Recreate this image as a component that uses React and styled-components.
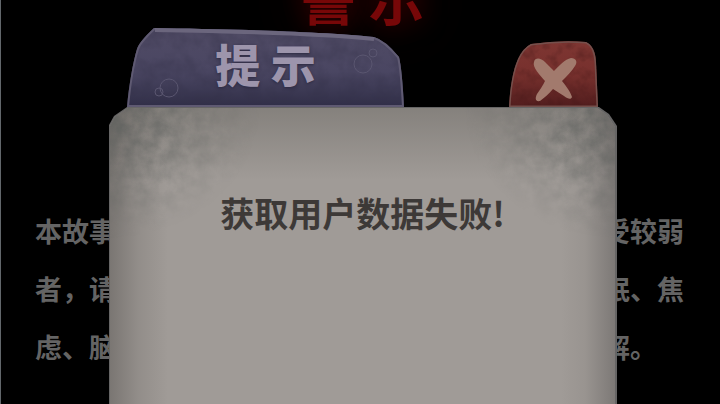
import React from "react";
import styled, { createGlobalStyle } from "styled-components";

const GlobalStyle = createGlobalStyle`
  * { box-sizing: border-box; }
  body {
    margin: 0;
    background: #000;
    font-family: "Noto Sans CJK SC", "Noto Sans", sans-serif;
  }
`;

const Page = styled.div`
  position: relative;
  height: 100vh;
  overflow: hidden;
  border-left: 1px solid #62676b;
  background: #000;
`;

const Warning = styled.main`
  padding: 0 36px 0 34px;
`;

const WarningTitle = styled.h1`
  margin: -36px 0 0;
  padding-left: 6px;
  height: 238px;
  font-size: 56px;
  line-height: 64px;
  font-weight: 700;
  text-align: center;
  color: #770708;
  text-shadow: 0 0 24px #3c0000, 0 0 56px #2c0000;
`;

const Notice = styled.div`
  color: #646464;
  font-size: 27px;
  line-height: 58px;
  font-weight: 700;
`;

const NoticeLine = styled.p`
  display: grid;
  grid-template-columns: 81px 81px;
  justify-content: space-between;
  margin: 0;
`;

const Dialog = styled.section`
  position: absolute;
  inset: 0;
  display: flex;
  flex-direction: column;
  padding: 27px 103px 0 108px;
`;

const DialogHeader = styled.header`
  display: flex;
  justify-content: space-between;
  align-items: flex-end;
  height: 80px;
  padding: 0 18px;
`;

const Shape = styled.svg`
  position: absolute;
  inset: 0;
  width: 100%;
  height: 100%;
`;

const TitleTab = styled.div`
  position: relative;
  width: 277px;
  height: 80px;
`;

const DialogTitle = styled.h2`
  position: relative;
  margin: 0;
  padding-top: 5px;
  color: #9d95ac;
  font-size: 45px;
  line-height: 64px;
  font-weight: 900;
  text-align: center;
  text-shadow: 0 1px 3px #2b2940;
`;

const CloseButton = styled.button`
  position: relative;
  width: 91px;
  height: 67px;
  padding: 0;
  border: 0;
  background: transparent;
  cursor: pointer;
`;

const corners = "polygon(0 18px, 5px 9px, 18px 0, calc(100% - 18px) 0, calc(100% - 8px) 7px, 100% 19px, 100% 100%, 0 100%)";

const PanelEdge = styled.div`
  display: flex;
  flex: 1;
  padding: 1px 2px 0 1px;
  background: #666565;
  clip-path: ${corners};
`;

const Panel = styled.div`
  position: relative;
  flex: 1;
  padding: 75px 24px 24px;
  clip-path: ${corners};
  background:
    linear-gradient(90deg, rgba(70, 67, 64, 0.42), rgba(90, 86, 83, 0.2) 28px, transparent 58px),
    linear-gradient(270deg, rgba(90, 87, 86, 0.5), rgba(90, 86, 83, 0.1) 30px, transparent 54px),
    linear-gradient(180deg, rgba(85, 83, 78, 0.36), transparent 72px),
    #a09b97;
`;

const Message = styled.p`
  position: relative;
  margin: 0;
  color: #3d3937;
  font-size: 34px;
  line-height: 60px;
  font-weight: 700;
  text-align: center;
`;

const Grunge = styled.svg`
  position: absolute;
  top: 0;
  ${(p) => p.$side}: 0;
  width: 150px;
  height: 130px;
`;

function CornerGrunge({ side }) {
  const right = side === "right";
  return (
    <Grunge $side={side} viewBox="0 0 150 130" aria-hidden="true">
      <defs>
        <filter id={`stain-${side}`} x="0" y="0" width="100%" height="100%" colorInterpolationFilters="sRGB">
          <feTurbulence type="fractalNoise" baseFrequency="0.07" numOctaves="5" seed={right ? 8 : 3} />
          <feColorMatrix values="0 0 0 0 0.37  0 0 0 0 0.38  0 0 0 0 0.37  1.8 0 0 0 -0.45" />
        </filter>
        <radialGradient id={`fade-${side}`} cx={right ? "1" : "0"} cy="0" r="1">
          <stop offset="0" stopColor="#fff" stopOpacity="0.8" />
          <stop offset="0.4" stopColor="#fff" stopOpacity="0.5" />
          <stop offset="1" stopColor="#fff" stopOpacity="0" />
        </radialGradient>
        <mask id={`mask-${side}`}>
          <rect width="150" height="130" fill={`url(#fade-${side})`} />
        </mask>
      </defs>
      <g mask={`url(#mask-${side})`}>
        <rect width="150" height="130" filter={`url(#stain-${side})`} />
      </g>
    </Grunge>
  );
}

function TabShape() {
  const outline = "M0 80 C2 58 6 35 10 22 Q12 15 27 1 C90 2 190 4 247 10 Q258 13 272 30 Q275 42 277 80 Z";
  return (
    <Shape viewBox="0 0 277 80" preserveAspectRatio="none" aria-hidden="true">
      <defs>
        <linearGradient id="tab-fill" x1="0" y1="0" x2="0" y2="1">
          <stop offset="0" stopColor="#504b65" />
          <stop offset="0.55" stopColor="#4a4662" />
          <stop offset="1" stopColor="#302e47" />
        </linearGradient>
        <clipPath id="tab-clip"><path d={outline} /></clipPath>
        <filter id="tab-noise" x="0" y="0" width="100%" height="100%" colorInterpolationFilters="sRGB">
          <feTurbulence type="fractalNoise" baseFrequency="0.06" numOctaves="4" seed="5" />
          <feColorMatrix values="0 0 0 0 0.2  0 0 0 0 0.19  0 0 0 0 0.28  0.7 0 0 0 -0.22" />
        </filter>
      </defs>
      <path d={outline} fill="url(#tab-fill)" />
      <g clipPath="url(#tab-clip)">
        <rect width="277" height="80" filter="url(#tab-noise)" />
        <path d={outline} fill="none" stroke="#5f5a72" strokeWidth="4" />
        <path d="M28 3 C90 4 190 6 247 12" fill="none" stroke="#6b667d" strokeWidth="4" />
      </g>
      <g fill="none" stroke="#5a5670" strokeWidth="1">
        <circle cx="236" cy="37" r="9" />
        <circle cx="246" cy="26" r="4" />
        <circle cx="42" cy="61" r="9" />
        <circle cx="32" cy="65" r="4" />
      </g>
    </Shape>
  );
}

function CloseShape() {
  const outline = "M1 67 C2 47 5 30 10 19 Q15 8 23 4 Q52 0 78 2 Q87 6 88 22 L90 67 Z";
  return (
    <Shape viewBox="0 0 91 67" preserveAspectRatio="none" aria-hidden="true">
      <defs>
        <linearGradient id="close-fill" x1="0" y1="0" x2="0" y2="1">
          <stop offset="0" stopColor="#7e3632" />
          <stop offset="0.5" stopColor="#77302d" />
          <stop offset="1" stopColor="#511d1d" />
        </linearGradient>
        <clipPath id="close-clip"><path d={outline} /></clipPath>
        <filter id="close-noise" x="0" y="0" width="100%" height="100%" colorInterpolationFilters="sRGB">
          <feTurbulence type="fractalNoise" baseFrequency="0.1" numOctaves="3" seed="2" />
          <feColorMatrix values="0 0 0 0 0.25  0 0 0 0 0.08  0 0 0 0 0.08  0.7 0 0 0 -0.28" />
        </filter>
      </defs>
      <path d={outline} fill="url(#close-fill)" />
      <g clipPath="url(#close-clip)">
        <rect width="91" height="67" filter="url(#close-noise)" />
        <path d={outline} fill="none" stroke="#75504c" strokeWidth="3" />
      </g>
      <path
        d="M26 22 C27 17 33 18 37 22 L46 31 C51 26 57 19 63 18 C68 18 70 22 67 26 C64 31 59 36 54 41 C59 47 63 53 64 57 C63 60 60 59 56 56 L45 49 C41 54 36 58 32 61 C27 62 27 58 29 54 C32 50 35 45 37 41 C32 35 24 27 26 22 Z"
        fill="#a27a6d"
      />
    </Shape>
  );
}

const noticeLines = [
  ["本故事", "受较弱"],
  ["者，请", "眠、焦"],
  ["虑、脑", "解。"],
];

export default function App() {
  return (
    <>
      <GlobalStyle />
      <Page>
        <Warning>
          <WarningTitle>警 示</WarningTitle>
          <Notice>
            {noticeLines.map(([start, end]) => (
              <NoticeLine key={start}>
                <span>{start}</span>
                <span>{end}</span>
              </NoticeLine>
            ))}
          </Notice>
        </Warning>
        <Dialog role="dialog" aria-labelledby="dialog-title">
          <DialogHeader>
            <TitleTab>
              <TabShape />
              <DialogTitle id="dialog-title">提 示</DialogTitle>
            </TitleTab>
            <CloseButton type="button" aria-label="关闭">
              <CloseShape />
            </CloseButton>
          </DialogHeader>
          <PanelEdge>
            <Panel>
              <CornerGrunge side="left" />
              <CornerGrunge side="right" />
              <Message>获取用户数据失败!</Message>
            </Panel>
          </PanelEdge>
        </Dialog>
      </Page>
    </>
  );
}
